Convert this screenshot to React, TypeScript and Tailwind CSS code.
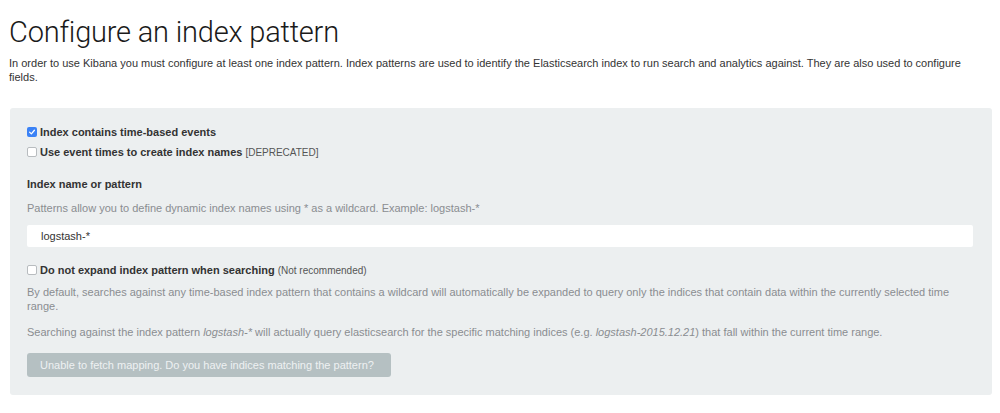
const Check = ({ checked }: { checked?: boolean }) => (
  checked ? (
    <span className="flex h-[10px] w-[10px] items-center justify-center rounded-[2px] bg-[#3b82f6]">
      <svg viewBox="0 0 10 10" className="h-[8px] w-[8px]">
        <path d="M2 5.2 L4.2 7.3 L8 2.8" fill="none" stroke="white" strokeWidth="1.6" strokeLinecap="round" strokeLinejoin="round" />
      </svg>
    </span>
  ) : (
    <span className="h-[10px] w-[10px] rounded-[2px] border border-[#b8bcbf] bg-white" />
  )
);

const App = () => {
  return (
    <div className="h-[413px] w-[1000px] bg-white text-[#2d2d2d]" style={{ fontFamily: '"Liberation Sans", Arial, sans-serif' }}>
      <div className="pl-[9px] pr-[8px] pt-[15px]">
        <h1 className="text-[29px] font-light leading-[35px] tracking-[-0.2px] text-[#1a1a1a]" style={{ fontFamily: 'Roboto, "Liberation Sans", sans-serif' }}>
          Configure an index pattern
        </h1>
        <p className="mt-[6px] text-[11px] leading-[14px] text-[#333]">
          In order to use Kibana you must configure at least one index pattern. Index patterns are used to identify the Elasticsearch index to run search and analytics against. They are also used to configure fields.
        </p>
      </div>

      {/* panel */}
      <div className="ml-[10px] mt-[24px] h-[287px] w-[982px] rounded-[3px] bg-[#eceff0] px-[17px] pt-[18px]">
        <label className="flex h-[12px] items-center gap-[3px] text-[11px] font-bold text-[#333]">
          <Check checked />
          <span>Index contains time-based events</span>
        </label>
        <label className="mt-[8px] flex h-[12px] items-center gap-[3px] text-[11px] text-[#333]">
          <Check />
          <span className="font-bold">Use event times to create index names</span>
          <span className="text-[10px] text-[#555]">[DEPRECATED]</span>
        </label>

        <div className="mt-[19px] text-[11px] font-bold leading-[14px] text-[#333]">Index name or pattern</div>
        <div className="mt-[10px] text-[11px] leading-[14px] text-[#8a8d90]">
          Patterns allow you to define dynamic index names using * as a wildcard. Example: logstash-*
        </div>

        <div className="mt-[10px] flex h-[22px] w-[946px] items-center rounded-[2px] bg-white pl-[14px] text-[11px] text-[#333]">
          logstash-*
        </div>

        <label className="mt-[17px] flex h-[12px] items-center gap-[3px] text-[11px] text-[#333]">
          <Check />
          <span className="font-bold">Do not expand index pattern when searching</span>
          <span className="text-[10px] text-[#555]">(Not recommended)</span>
        </label>

        <p className="mt-[9px] pr-[10px] text-[11px] leading-[14px] text-[#8a8d90]">
          By default, searches against any time-based index pattern that contains a wildcard will automatically be expanded to query only the indices that contain data within the currently selected time range.
        </p>
        <p className="mt-[12px] text-[11px] leading-[14px] text-[#8a8d90]">
          Searching against the index pattern <i>logstash-*</i> will actually query elasticsearch for the specific matching indices (e.g. <i>logstash-2015.12.21</i>) that fall within the current time range.
        </p>

        <button className="mt-[14px] flex h-[24px] w-[364px] items-center rounded-[3px] bg-[#b5c0c2] pl-[13px] text-[11px] text-[#eef1f2]">
          Unable to fetch mapping. Do you have indices matching the pattern?
        </button>
      </div>
    </div>
  );
};

export default App;
